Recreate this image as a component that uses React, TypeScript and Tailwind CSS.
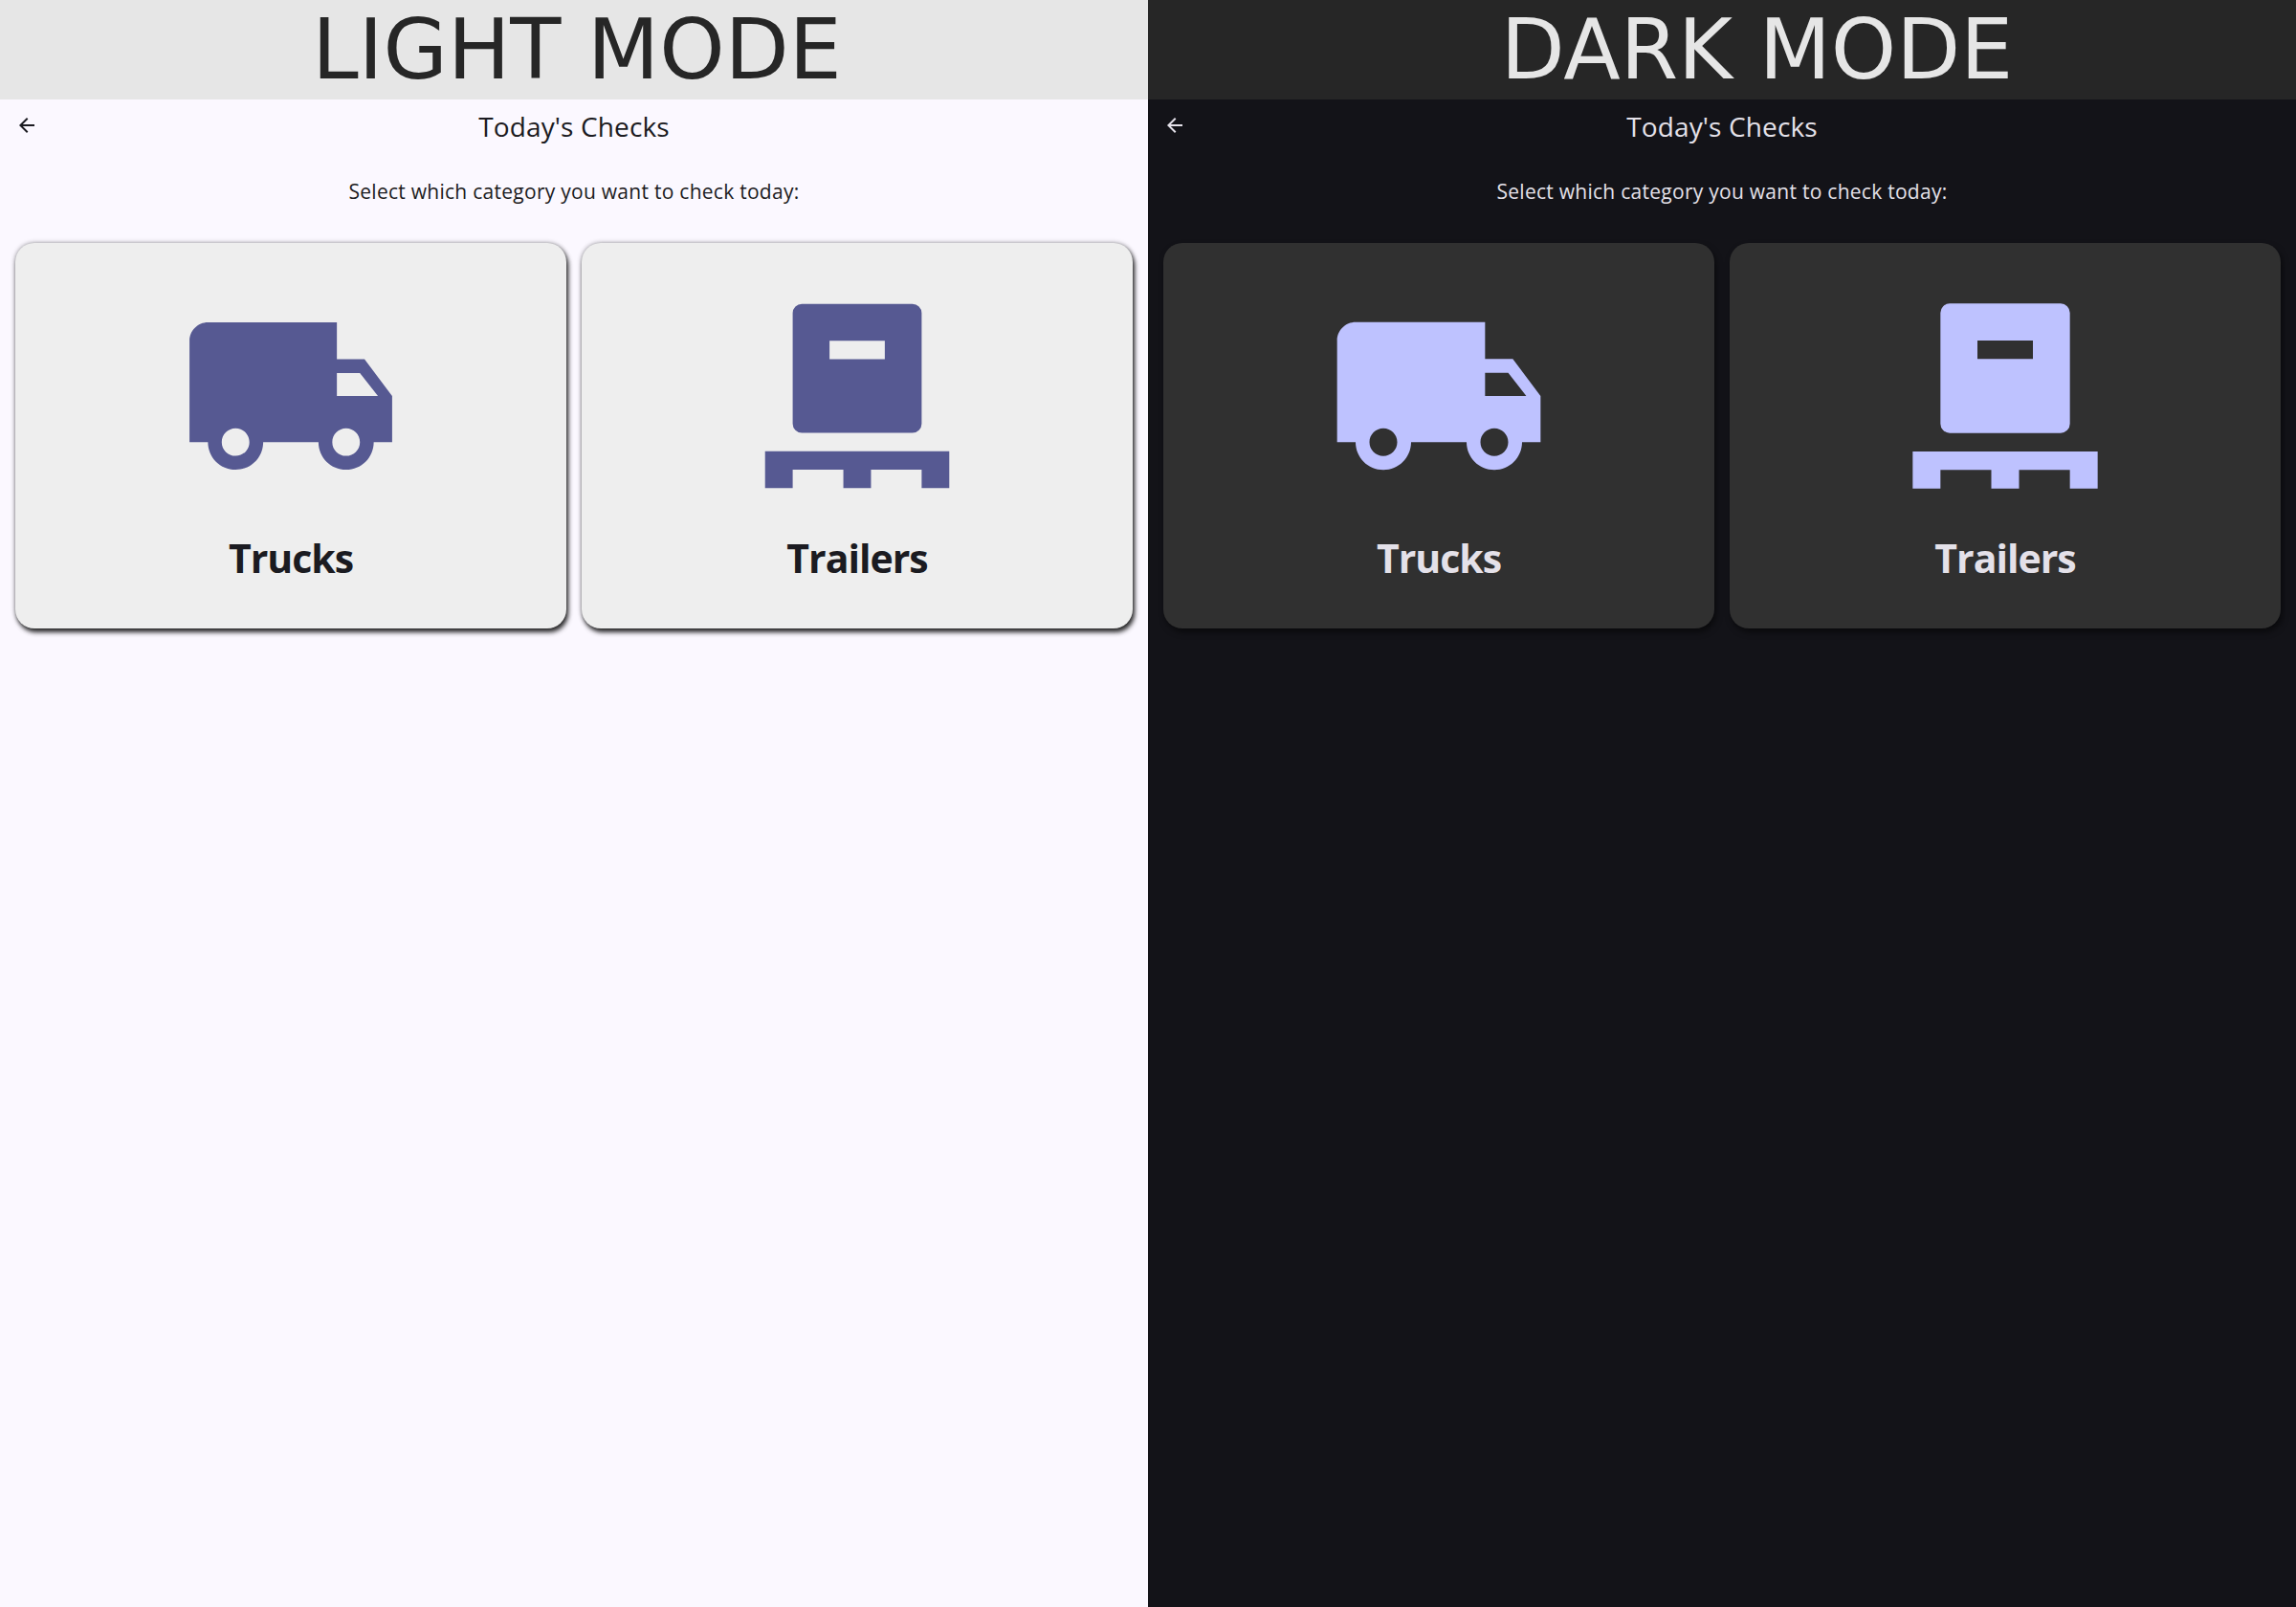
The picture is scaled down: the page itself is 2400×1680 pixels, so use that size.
import { ReactNode } from 'react'

type Theme = {
  label: string
  bannerClass: string
  pageClass: string
  cardClass: string
  iconClass: string
  textClass: string
}

const LIGHT: Theme = {
  label: 'LIGHT MODE',
  bannerClass: 'bg-[#e6e6e6] pl-[6px] text-[#262626]',
  pageClass: 'bg-[#fbf8ff] text-[#1b1b21]',
  cardClass: 'bg-[#eeeeee] shadow-[2px_4px_5px_rgba(0,0,0,0.8),0_0_5px_rgba(0,0,0,0.4)]',
  iconClass: 'scale-[0.996] text-[#565992]',
  textClass: 'text-[#1b1b21]',
}

const DARK: Theme = {
  label: 'DARK MODE',
  bannerClass: 'bg-[#262626] pl-[73px] text-[#e6e6e6]',
  pageClass: 'bg-[#131318] text-[#e4e1e9]',
  cardClass: 'bg-[#303030] shadow-[2px_4px_6px_rgba(0,0,0,0.5)]',
  iconClass: 'text-[#bec2ff]',
  textClass: 'text-[#e4e1e9]',
}

function TruckIcon() {
  return (
    <svg viewBox="0 0 24 24" className="h-[232px] w-[232px]" fill="currentColor">
      <path d="M20 8h-3V4H3c-1.1 0-2 .9-2 2v11h2c0 1.66 1.34 3 3 3s3-1.34 3-3h6c0 1.66 1.34 3 3 3s3-1.34 3-3h2v-5l-3-4zM6 18.5c-.83 0-1.5-.67-1.5-1.5s.67-1.5 1.5-1.5 1.5.67 1.5 1.5-.67 1.5-1.5 1.5zm13.5-9l1.96 2.5H17V9.5h2.5zm-1.5 9c-.83 0-1.5-.67-1.5-1.5s.67-1.5 1.5-1.5 1.5.67 1.5 1.5-.67 1.5-1.5 1.5z" />
    </svg>
  )
}

function PalletIcon() {
  return (
    <svg viewBox="0 0 24 24" className="h-[232px] w-[232px]" fill="currentColor">
      <path
        fillRule="evenodd"
        d="M6 2h12a1 1 0 0 1 1 1v12a1 1 0 0 1-1 1H6a1 1 0 0 1-1-1V3a1 1 0 0 1 1-1zm3 4v2h6V6H9z"
      />
      <path d="M2 18h20v4h-3v-2h-5.5v2h-3v-2H5v2H2z" />
    </svg>
  )
}

function CategoryCard({ theme, icon, label }: { theme: Theme; icon: ReactNode; label: string }) {
  return (
    <div className={`flex h-[403px] flex-col items-center rounded-[20px] pt-[44px] ${theme.cardClass}`}>
      <div className={theme.iconClass}>{icon}</div>
      <span className={`mt-[26px] font-['Open_Sans',sans-serif] text-[41px] leading-[54px] font-bold tracking-[-1px] ${theme.textClass}`}>
        {label}
      </span>
    </div>
  )
}

function Panel({ theme }: { theme: Theme }) {
  return (
    <div className={`flex h-[1680px] flex-col ${theme.pageClass}`}>
      <div className={`flex h-[104px] items-center justify-center font-['DejaVu_Sans',sans-serif] text-[87px] leading-none ${theme.bannerClass}`}>
        {theme.label}
      </div>
      <div className="relative flex h-[56px] items-center justify-center">
        <svg viewBox="0 0 24 24" className="absolute top-[15px] left-[16px] h-6 w-6" fill="currentColor">
          <path d="M20 11H7.83l5.59-5.59L12 4l-8 8 8 8 1.41-1.41L7.83 13H20v-2z" />
        </svg>
        <span className="font-['Open_Sans',sans-serif] text-[28px] leading-none font-normal tracking-[0.13px]">Today's Checks</span>
      </div>
      <p className="mt-[26px] text-center font-['Open_Sans',sans-serif] text-[21px] leading-[28px] font-normal tracking-[0.27px]">
        Select which category you want to check today:
      </p>
      <div className="mt-[40px] grid grid-cols-2 gap-4 px-4">
        <CategoryCard theme={theme} icon={<TruckIcon />} label="Trucks" />
        <CategoryCard theme={theme} icon={<PalletIcon />} label="Trailers" />
      </div>
    </div>
  )
}

export default function App() {
  return (
    <div className="grid h-[1680px] w-[2400px] grid-cols-2 overflow-hidden">
      <Panel theme={LIGHT} />
      <Panel theme={DARK} />
    </div>
  )
}
